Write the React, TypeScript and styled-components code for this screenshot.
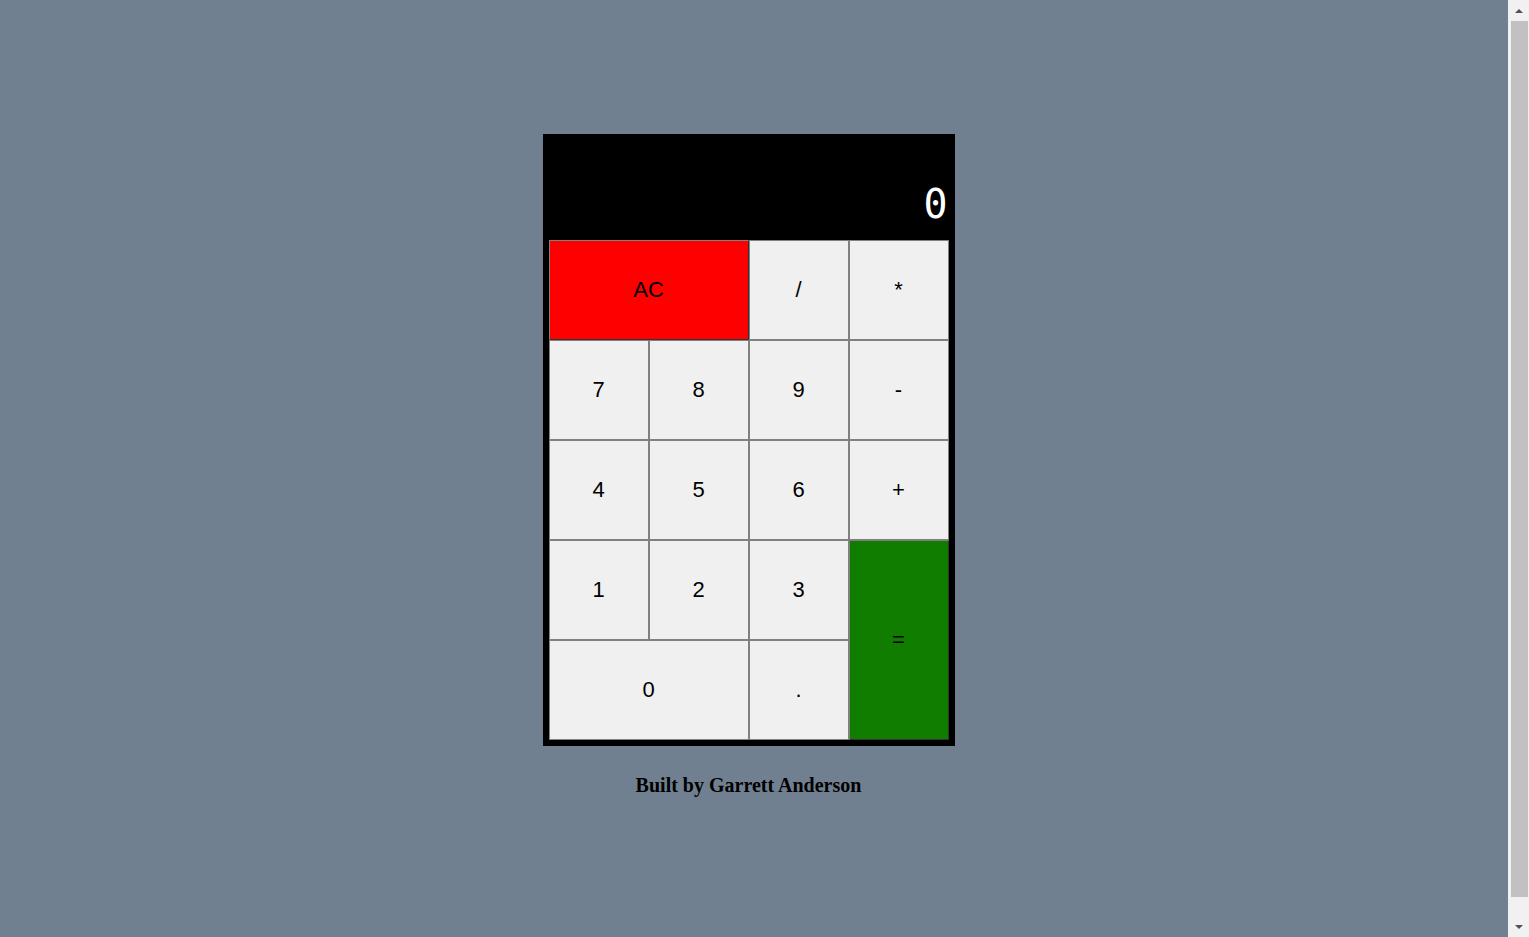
import styled, { createGlobalStyle } from 'styled-components';

const GlobalStyle = createGlobalStyle`
  html, body {
    margin: 0;
    padding: 0;
    background: #708090;
    overflow: hidden;
  }
  body {
    font-family: "Liberation Serif", "Times New Roman", serif;
  }
`;

const Page = styled.div`
  min-height: 937px;
  display: flex;
  flex-direction: column;
  align-items: center;
  padding: 134px 32px 0 0;
  box-sizing: border-box;
`;

const Calculator = styled.div`
  width: 400px;
  background: #000;
  border: 6px solid #000;
  border-top: 0;
`;

const Display = styled.div`
  height: 106px;
  display: flex;
  align-items: flex-end;
  justify-content: flex-end;
  padding: 0 1px 19px 0;
  box-sizing: border-box;
  color: #fff;
  font-family: "DejaVu Sans Mono", monospace;
  font-size: 40px;
  line-height: 34px;
`;

const Keys = styled.div`
  display: grid;
  grid-template-columns: repeat(4, 100px);
  grid-template-rows: repeat(5, 100px);
`;

type KeyProps = { $tone?: 'clear' | 'equals'; $wide?: boolean; $tall?: boolean };

const Key = styled.button<KeyProps>`
  box-sizing: border-box;
  margin: 0;
  padding: 0;
  font-family: "Liberation Sans", Arial, sans-serif;
  font-size: 22px;
  color: #000;
  background: ${(p) => (p.$tone === 'clear' ? '#ff0000' : p.$tone === 'equals' ? '#107c00' : '#f0f0f0')};
  border: 1px solid #808080;
  border-right-color: ${(p) => (p.$tone ? '#333' : '#808080')};
  border-bottom-color: ${(p) => (p.$tone ? '#333' : '#808080')};
  grid-column: ${(p) => (p.$wide ? 'span 2' : 'auto')};
  grid-row: ${(p) => (p.$tall ? 'span 2' : 'auto')};
  cursor: pointer;
`;

const Credit = styled.h3`
  margin: 28px 0 0;
  font-size: 20px;
  font-weight: bold;
  color: #000;
`;

const Scrollbar = styled.div`
  position: fixed;
  top: 0;
  right: 0;
  bottom: 0;
  width: 21px;
  background: #f1f1f1;
  display: flex;
  flex-direction: column;
  align-items: center;
`;

const Arrow = styled.div<{ $down?: boolean }>`
  height: 21px;
  width: 100%;
  display: flex;
  align-items: center;
  justify-content: center;
  &::after {
    content: '';
    border-left: 4px solid transparent;
    border-right: 4px solid transparent;
    ${(p) => (p.$down ? 'border-top: 4px solid #505050;' : 'border-bottom: 4px solid #505050;')}
  }
`;

const Thumb = styled.div`
  flex: 1;
  width: 17px;
  margin: 0 0 19px 2px;
  background: #c1c1c1;
`;

export default function App() {
  return (
    <>
      <GlobalStyle />
      <Page>
        <Calculator>
          <Display>0</Display>
          <Keys>
            <Key $tone="clear" $wide>AC</Key>
            <Key>/</Key>
            <Key>*</Key>
            <Key>7</Key>
            <Key>8</Key>
            <Key>9</Key>
            <Key>-</Key>
            <Key>4</Key>
            <Key>5</Key>
            <Key>6</Key>
            <Key>+</Key>
            <Key>1</Key>
            <Key>2</Key>
            <Key>3</Key>
            <Key $tone="equals" $tall>=</Key>
            <Key $wide>0</Key>
            <Key>.</Key>
          </Keys>
        </Calculator>
        <Credit>Built by Garrett Anderson</Credit>
      </Page>
      <Scrollbar>
        <Arrow />
        <Thumb />
        <Arrow $down />
      </Scrollbar>
    </>
  );
}
